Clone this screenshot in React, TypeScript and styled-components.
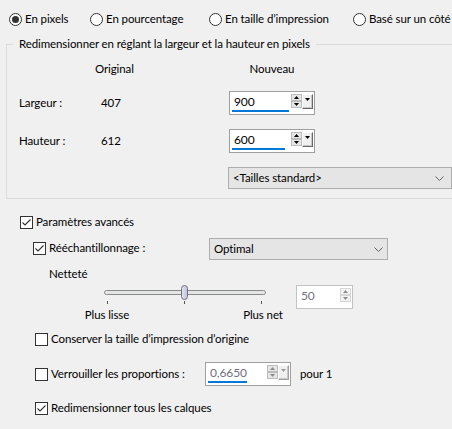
import React from "react";
import styled, { createGlobalStyle } from "styled-components";

const GlobalStyle = createGlobalStyle`
  html, body {
    margin: 0;
    padding: 0;
    background: #f0f0f0;
  }
  body {
    font-family: Lato, "Liberation Sans", sans-serif;
    font-size: 11.5px;
    letter-spacing: -0.1px;
    color: #000;
    overflow: hidden;
  }
`;

const Dialog = styled.div`
  width: 452px;
  height: 429px;
  overflow: hidden;
  background: #f0f0f0;
  line-height: 16px;
`;

// radios

const RadioRow = styled.div`
  display: flex;
  align-items: center;
  height: 14px;
  padding: 12px 0 0 9px;
  white-space: nowrap;
`;

const RadioItem = styled.label<{ $width?: number }>`
  display: flex;
  align-items: center;
  gap: 3px;
  flex: none;
  width: ${(p) => (p.$width ? `${p.$width}px` : "auto")};
`;

const RadioCircle = styled.span<{ $on?: boolean }>`
  width: 13px;
  height: 13px;
  box-sizing: border-box;
  border: 1px solid #333;
  border-radius: 50%;
  background: #fff;
  display: flex;
  align-items: center;
  justify-content: center;

  &::after {
    content: "";
    width: 7px;
    height: 7px;
    border-radius: 50%;
    background: #333;
    display: ${(p) => (p.$on ? "block" : "none")};
  }
`;

// group box

const GroupBox = styled.fieldset`
  margin: 10px 0 0 6px;
  padding: 0 0 9px 12px;
  border: 1px solid #dcdcdc;
  width: 480px;
  min-width: 0;
`;

const Legend = styled.legend`
  padding: 0 6px;
  margin-left: -6px;
  line-height: 16px;
`;

const SizeGrid = styled.div`
  display: grid;
  grid-template-columns: 76px 134px 86px;
  grid-template-rows: 16px 24px 24px 22px;
  row-gap: 14px;
  align-items: center;
  padding-top: 9px;
  white-space: nowrap;
`;

const HeadCell = styled.div<{ $center?: boolean }>`
  text-align: ${(p) => (p.$center ? "center" : "left")};
`;

const ValueCell = styled.div`
  padding-left: 6px;
`;

const SelectCell = styled.div`
  grid-column: 3 / span 1;
  margin-left: -1px;
`;

// spin box

const SpinFrame = styled.div<{ $width: number; $light?: boolean }>`
  display: flex;
  width: ${(p) => p.$width}px;
  height: 24px;
  box-sizing: border-box;
  border: 1px solid ${(p) => (p.$light ? "#c3c3c3" : "#a0a0a0")};
  background: #fff;
  padding: 1px;
`;

const SpinField = styled.div`
  flex: 1;
  display: flex;
  flex-direction: column;
`;

const SpinText = styled.span<{ $disabled?: boolean }>`
  padding: 1px 0 0 3px;
  line-height: 16px;
  font-size: 12px;
  color: ${(p) => (p.$disabled ? "#6f6f80" : "#000")};
`;

const SpinBar = styled.span`
  display: block;
  height: 3px;
  margin: auto 0 1px 1px;
  background: #0078d7;
`;

const Arrows = styled.div`
  display: flex;
  flex-direction: column;
  width: 11px;
  margin-top: 1px;
`;

const ArrowBtn = styled.span<{ $disabled?: boolean }>`
  width: 11px;
  height: 7px;
  box-sizing: border-box;
  border: 1px solid ${(p) => (p.$disabled ? "#d6d6d6" : "#bcbcbc")};
  background: ${(p) => (p.$disabled ? "#f4f4f4" : "#e6e6e6")};
  display: flex;
  align-items: center;
  justify-content: center;
`;

const DropBtn = styled.span<{ $disabled?: boolean }>`
  width: 11px;
  height: 15px;
  margin-top: 1px;
  box-sizing: border-box;
  background: #f0f0f0;
  border-top: 1px solid #fff;
  border-left: 1px solid #fff;
  border-right: 1px solid ${(p) => (p.$disabled ? "#a0a0a0" : "#696969")};
  border-bottom: 1px solid ${(p) => (p.$disabled ? "#a0a0a0" : "#696969")};
  box-shadow: inset -1px -1px 0 #c8c8c8;
  display: flex;
  justify-content: center;
  padding-top: 3px;
`;

const Tri = ({ up, color }: { up?: boolean; color: string }) => (
  <svg width="5" height="3" viewBox="0 0 5 3">
    <polygon points={up ? "0,3 5,3 2.5,0" : "0,0 5,0 2.5,3"} fill={color} />
  </svg>
);

type SpinProps = {
  value: string;
  width: number;
  fill?: number;
  disabled?: boolean;
  light?: boolean;
  drop?: boolean;
};

const SpinBox = ({ value, width, fill, disabled, light, drop }: SpinProps) => (
  <SpinFrame $width={width} $light={light}>
    <SpinField>
      <SpinText $disabled={disabled}>{value}</SpinText>
      {fill !== undefined && <SpinBar style={{ width: fill }} />}
    </SpinField>
    <Arrows>
      <ArrowBtn $disabled={light}>
        <Tri up color={disabled ? "#8a8a8a" : "#000"} />
      </ArrowBtn>
      <ArrowBtn $disabled={light}>
        <Tri color={disabled ? "#8a8a8a" : "#000"} />
      </ArrowBtn>
    </Arrows>
    {drop && (
      <DropBtn $disabled={disabled}>
        <Tri color={disabled ? "#9a9a9a" : "#000"} />
      </DropBtn>
    )}
  </SpinFrame>
);

// select

const SelectBox = styled.div<{ $width: number; $pr: number }>`
  display: flex;
  align-items: center;
  justify-content: space-between;
  width: ${(p) => p.$width}px;
  height: 22px;
  box-sizing: border-box;
  border: 1px solid #adadad;
  background: #e5e5e5;
  padding: 0 ${(p) => p.$pr}px 0 4px;
  white-space: nowrap;
`;

const Chevron = () => (
  <svg width="9" height="5" viewBox="0 0 9 5">
    <polyline points="0.5,0.5 4.5,4.5 8.5,0.5" fill="none" stroke="#606060" strokeWidth="1" />
  </svg>
);

const Select = ({ label, width, pr }: { label: string; width: number; pr: number }) => (
  <SelectBox $width={width} $pr={pr}>
    <span>{label}</span>
    <Chevron />
  </SelectBox>
);

// check boxes

const CheckRow = styled.div<{ $indent: number; $top: number; $height?: number }>`
  display: flex;
  align-items: center;
  padding-left: ${(p) => p.$indent}px;
  margin-top: ${(p) => p.$top}px;
  height: ${(p) => p.$height ?? 16}px;
  white-space: nowrap;
`;

const CheckLabel = styled.label<{ $width?: number }>`
  display: flex;
  align-items: center;
  gap: 3px;
  flex: none;
  width: ${(p) => (p.$width ? `${p.$width}px` : "auto")};
`;

const Box = styled.span`
  width: 13px;
  height: 13px;
  box-sizing: border-box;
  border: 1px solid #333;
  background: #fff;
  display: flex;
  align-items: center;
  justify-content: center;
`;

const Check = ({ on }: { on?: boolean }) => (
  <Box>
    {on && (
      <svg width="11" height="11" viewBox="0 0 11 11">
        <polyline points="1.5,5.5 4,8 9.5,2.5" fill="none" stroke="#333" strokeWidth="1.1" />
      </svg>
    )}
  </Box>
);

const ResampleRow = styled.div`
  display: flex;
  align-items: flex-start;
  padding-left: 33px;
  margin-top: 8px;
  height: 21px;
  white-space: nowrap;

  & > label {
    margin-top: 2px;
  }
`;

const Note = styled.div`
  padding-left: 49px;
  margin-top: 7px;
  height: 16px;
`;

// slider

const SliderRow = styled.div`
  display: flex;
  align-items: flex-start;
  padding-left: 104px;
  margin-top: 3px;
`;

const SliderBlock = styled.div`
  width: 162px;
  flex: none;
`;

const Track = styled.div`
  position: relative;
  height: 5px;
  margin-top: 5px;
  box-sizing: border-box;
  border: 1px solid #8a8a8a;
  border-radius: 3px;
  background: #e4e6e6;
`;

const Thumb = styled.span`
  position: absolute;
  top: -6px;
  width: 7px;
  height: 15px;
  margin-left: -4px;
  box-sizing: border-box;
  border: 1px solid #6e6e88;
  border-radius: 4px;
  background: linear-gradient(to right, #e2e2f0, #c4c4da);
`;

const Ticks = styled.div`
  display: flex;
  justify-content: space-between;
  padding: 0 4px 0 3px;
  margin-top: 6px;
  height: 3px;

  & > span {
    width: 1px;
    background: #555;
  }
`;

const TickLabels = styled.div`
  display: flex;
  justify-content: space-between;
  margin: 3px -20px 0 -20px;
  height: 16px;
  white-space: nowrap;

  & > span {
    width: 46px;
    text-align: center;
  }
`;

const SpinSlot = styled.div`
  margin-left: 30px;
`;

const After = styled.span`
  margin-left: 9px;
`;

const App = () => {
  const sharpness = 50;
  const radios = [
    { label: "En pixels", w: 81, on: true },
    { label: "En pourcentage", w: 119 },
    { label: "En taille d’impression", w: 144 },
    { label: "Basé sur un côté" },
  ];

  return (
    <Dialog>
      <GlobalStyle />
      <RadioRow>
        {radios.map((r) => (
          <RadioItem key={r.label} $width={r.w}>
            <RadioCircle $on={r.on} />
            <span>{r.label}</span>
          </RadioItem>
        ))}
      </RadioRow>

      <GroupBox>
        <Legend>Redimensionner en réglant la largeur et la hauteur en pixels</Legend>
        <SizeGrid>
          <div />
          <HeadCell>Original</HeadCell>
          <HeadCell $center>Nouveau</HeadCell>

          <div>Largeur :</div>
          <ValueCell>407</ValueCell>
          <SpinBox value="900" width={86} fill={57} drop />

          <div>Hauteur :</div>
          <ValueCell>612</ValueCell>
          <SpinBox value="600" width={86} fill={53} drop />

          <SelectCell>
            <Select label="<Tailles standard>" width={224} pr={7} />
          </SelectCell>
        </SizeGrid>
      </GroupBox>

      <CheckRow $indent={20} $top={15}>
        <CheckLabel>
          <Check on />
          <span>Paramètres avancés</span>
        </CheckLabel>
      </CheckRow>

      <ResampleRow>
        <CheckLabel $width={176}>
          <Check on />
          <span>Rééchantillonnage :</span>
        </CheckLabel>
        <Select label="Optimal" width={179} pr={4} />
      </ResampleRow>

      <Note>Netteté</Note>

      <SliderRow>
        <SliderBlock>
          <Track>
            <Thumb style={{ left: `${sharpness}%` }} />
          </Track>
          <Ticks>
            <span />
            <span />
            <span />
          </Ticks>
          <TickLabels>
            <span>Plus lisse</span>
            <span>Plus net</span>
          </TickLabels>
        </SliderBlock>
        <SpinSlot>
          <SpinBox value={String(sharpness)} width={57} disabled light />
        </SpinSlot>
      </SliderRow>

      <CheckRow $indent={35} $top={8}>
        <CheckLabel>
          <Check />
          <span>Conserver la taille d’impression d’origine</span>
        </CheckLabel>
      </CheckRow>

      <CheckRow $indent={35} $top={15} $height={24}>
        <CheckLabel $width={170}>
          <Check />
          <span>Verrouiller les proportions :</span>
        </CheckLabel>
        <SpinBox value="0,6650" width={86} fill={39} disabled drop />
        <After>pour 1</After>
      </CheckRow>

      <CheckRow $indent={35} $top={14}>
        <CheckLabel>
          <Check on />
          <span>Redimensionner tous les calques</span>
        </CheckLabel>
      </CheckRow>
    </Dialog>
  );
};

export default App;
